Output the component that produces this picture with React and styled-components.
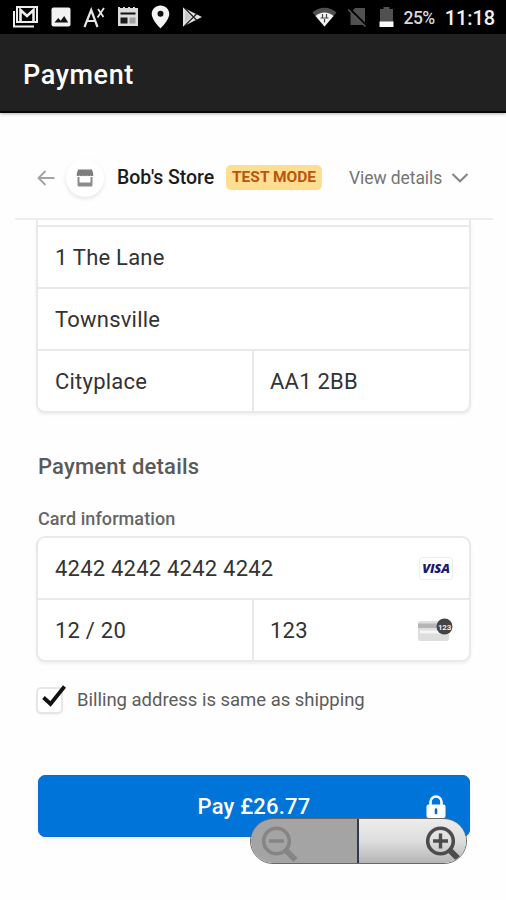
import React, {Fragment} from 'react'
import styled, {createGlobalStyle, css} from 'styled-components'

const LINE = '#e9e9e9'

const GlobalStyle = createGlobalStyle`
  * {
    box-sizing: border-box;
  }

  body {
    margin: 0;
    background: #fefefe;
    font-family: Roboto, 'Liberation Sans', sans-serif;
  }
`

const Screen = styled.div`
  position: relative;
  display: flex;
  flex-direction: column;
  width: 506px;
  height: 900px;
  overflow: hidden;
`

const StatusBar = styled.div`
  display: flex;
  justify-content: space-between;
  align-items: center;
  flex: none;
  height: 34px;
  padding: 0 11px 0 12px;
  background: #000;
`

const StatusGroup = styled.div`
  display: flex;
  align-items: center;
  gap: ${props => props.gap};
`

const Battery = styled.span`
  font-size: 17.5px;
  font-weight: 500;
  letter-spacing: -0.5px;
  line-height: 34px;
  padding-top: 2px;
  margin-left: -2px;
  color: #d8d8d8;
`

const Clock = styled.span`
  font-size: 20px;
  font-weight: 500;
  letter-spacing: -0.1px;
  line-height: 34px;
  padding-top: 2px;
  margin-left: -1px;
  color: #f2f2f2;
`

const AppBar = styled.header`
  flex: none;
  height: 79px;
  padding-left: 23px;
  background: #212121;
  border-bottom: 2px solid #080808;
  box-shadow: 0 1px 3px rgba(0, 0, 0, 0.3);
`

const AppTitle = styled.h1`
  margin: 0;
  font-size: 27px;
  font-weight: 500;
  letter-spacing: 0.6px;
  line-height: 82px;
  color: #fff;
`

const StoreBar = styled.div`
  display: flex;
  align-items: center;
  flex: none;
  height: 107px;
  margin: 0 13px 0 15px;
  padding: 24px 23px 0 22px;
  border-bottom: 2px solid #ededed;
`

const StoreLogo = styled.div`
  display: flex;
  align-items: center;
  justify-content: center;
  width: 38px;
  height: 38px;
  margin: 0 13px 0 11px;
  border-radius: 50%;
  background: #fff;
  box-shadow: 0 2px 4px rgba(0, 0, 0, 0.1);
`

const StoreName = styled.span`
  width: 109px;
  font-size: 19.5px;
  font-weight: 500;
  letter-spacing: -0.05px;
  color: #1c1c1c;
`

const TestBadge = styled.span`
  width: 96px;
  height: 25px;
  border-radius: 5px;
  background: #ffde92;
  font-size: 15.5px;
  font-weight: 700;
  line-height: 24px;
  text-align: center;
  white-space: nowrap;
  color: #bb5510;
`

const ViewDetails = styled.button`
  display: flex;
  align-items: center;
  justify-content: space-between;
  flex: none;
  width: 120px;
  margin-left: 27px;
  padding: 0;
  border: none;
  background: none;
  font-family: inherit;
  font-size: 17.5px;
  letter-spacing: -0.08px;
  white-space: nowrap;
  color: #757575;
`

const Form = styled.main`
  display: flex;
  flex-direction: column;
  padding: 0 35px 0 36px;
`

const FieldGroup = styled.div`
  border: 2px solid ${LINE};
  border-radius: 9px;
  background: #fff;
  box-shadow: 0 2px 3px rgba(0, 0, 0, 0.06);

  ${props =>
    props.scrolled &&
    css`
      padding-top: 5px;
      border-top: none;
      border-top-left-radius: 0;
      border-top-right-radius: 0;
    `};
`

const FieldRow = styled.div`
  display: grid;
  grid-template-columns: ${props => (props.split ? '214px 1fr' : '1fr')};
  height: ${props => (props.ruled ? 62 : 60)}px;
  border-top: ${props => (props.ruled ? `2px solid ${LINE}` : 'none')};
`

const Field = styled.div`
  display: flex;
  align-items: center;
  justify-content: space-between;
  padding: 0 16px 0 17px;
  font-size: 22px;
  letter-spacing: 0.22px;
  color: #333;

  & + & {
    border-left: 2px solid ${LINE};
    padding-left: 16px;
  }
`

const SectionTitle = styled.h2`
  margin: 40px 0 0 2px;
  font-size: 22px;
  font-weight: 500;
  letter-spacing: 0.2px;
  line-height: 28px;
  color: #5a5a5a;
`

const FieldLabel = styled.div`
  margin: 26px 0 5px 2px;
  font-size: 18px;
  font-weight: 500;
  letter-spacing: 0.08px;
  line-height: 24px;
  color: #666;
`

const VisaMark = styled.span`
  width: 34px;
  height: 23px;
  border: 1px solid #ececec;
  border-radius: 3px;
  font-family: 'Open Sans', sans-serif;
  font-size: 13px;
  font-style: italic;
  font-weight: 800;
  letter-spacing: -0.3px;
  line-height: 21px;
  text-align: center;
  color: #1c1a70;
`

const CheckRow = styled.label`
  display: flex;
  align-items: center;
  height: 30px;
  margin-top: 23px;
  font-size: 18.5px;
  letter-spacing: -0.02px;
  white-space: nowrap;
  color: #5c5c5c;
`

const CheckBox = styled.span`
  width: 27px;
  height: 27px;
  margin-right: 14px;
  border: 2px solid #e6e6e6;
  border-radius: 5px;
  background: #fff;
  box-shadow: 0 1px 2px rgba(0, 0, 0, 0.05);

  svg {
    display: block;
    margin: -4px 0 0 2px;
    overflow: visible;
  }
`

const PayButton = styled.button`
  display: grid;
  grid-template-columns: 1fr auto 1fr;
  align-items: center;
  height: 62px;
  margin: 60px 1px 0 2px;
  padding: 0 23px;
  border: 1px solid #0b6bd0;
  border-radius: 7px;
  background: #0074d8;
  box-shadow: 0 3px 5px rgba(0, 0, 0, 0.05);
  font-family: inherit;
  font-size: 22px;
  font-weight: 500;
  letter-spacing: 0.2px;
  color: #fff;
`

const PayLabel = styled.span`
  grid-column: 2;
`

const LockSlot = styled.span`
  justify-self: end;
  height: 23px;
`

// floats over the page like the native WebView zoom buttons
const ZoomControls = styled.div`
  position: absolute;
  left: 250px;
  top: 818px;
  display: flex;
  width: 217px;
  height: 46px;
  border: 1.5px solid #686868;
  border-radius: 23px;
  overflow: hidden;
`

const ZoomButton = styled.button`
  display: flex;
  align-items: center;
  justify-content: ${props => (props.disabled ? 'flex-start' : 'flex-end')};
  width: ${props => (props.disabled ? 108 : 107)}px;
  padding: ${props => (props.disabled ? '4px 0 0 9px' : '4px 2px 0 0')};
  border: none;
  border-right: ${props => (props.disabled ? '2px solid #333a50' : 'none')};
  background: ${props => (props.disabled ? '#a4a4a4' : 'linear-gradient(#ececec, #dedede 50%, #b5b5b5)')};
`

const MailIcon = () => (
  <svg width="27" height="23" viewBox="0 0 27 23" fill="none" stroke="#eee">
    <path d="M2 5v15.500h20" strokeWidth="2" />
    <rect x="5" y="1" width="20" height="15" strokeWidth="2" />
    <path d="M8.500 16V4l6.500 6 6.500-6v12" strokeWidth="2.600" />
  </svg>
)

const PhotoIcon = () => (
  <svg width="20" height="20" viewBox="0 0 20 20">
    <rect x=".5" y=".5" width="19" height="19" rx="2" fill="#f2f2f2" />
    <path d="M3.500 15.500l3.700-4.500 2.500 2.700 3.500-4.700 4 6.500z" fill="#111" />
  </svg>
)

const TranslateIcon = () => (
  <svg width="22" height="21" viewBox="0 0 22 21" fill="none" stroke="#e6e6e6">
    <path d="M1.500 20L8.200 3l6.300 17M4 14h8.400" strokeWidth="2.200" />
    <path d="M15 2l5.500 8M21 1l-6.500 9.500" strokeWidth="1.800" />
  </svg>
)

const NewsIcon = () => (
  <svg width="22" height="20" viewBox="0 0 22 20">
    <path d="M1 2V0h2v1h3V0h2v1h3V0h2v1h3V0h2v1h3v18H1z" fill="#dcdcdc" />
    <path d="M3.500 5.500h15v2h-15z" fill="#111" />
    <path d="M3.500 10.500h7v6h-7z" fill="#1a1a1a" />
    <path d="M12.500 10.500h6v6h-6z" fill="#a0a0a0" />
  </svg>
)

const PinIcon = () => (
  <svg width="19" height="24" viewBox="0 0 19 24">
    <path d="M9.500.5C4.500.5.7 4.300.7 9.100c0 5.900 8.800 14.400 8.800 14.400s8.800-8.500 8.800-14.400c0-4.800-3.800-8.600-8.800-8.600z" fill="#f4f4f4" />
    <circle cx="9.500" cy="8.800" r="3" fill="#111" />
  </svg>
)

const PlayIcon = () => (
  <svg width="21" height="20" viewBox="0 0 21 20">
    <path d="M1 .5L20 10 1 19.500z" fill="#e3e3e3" />
    <path d="M2.500 1L15 13.500M2.500 19L15 6.500" stroke="#222" strokeWidth="1.300" />
    <path d="M3 4v12l6-6z" fill="#c8c8c8" />
  </svg>
)

const WifiIcon = () => (
  <svg width="25" height="20" viewBox="0 0 25 20">
    <path d="M.5 5.500C7-.8 18-.8 24.500 5.500L12.500 19.500z" fill="#505050" />
    <path d="M3.500 9C8.500 4.300 16.500 4.300 21.500 9L12.500 19.500z" fill="#f4f4f4" />
    <path d="M10.500 7v3.500M14.500 7v3.500M8.500 11h8M12.500 12v3.500" stroke="#444" strokeWidth="1.200" />
  </svg>
)

const NoSimIcon = () => (
  <svg width="20" height="20" viewBox="0 0 20 20">
    <path d="M7 1h10v17H2.500V6z" fill="#505050" />
    <path d="M1 1.500L18 18.500" stroke="#000" strokeWidth="2.500" />
    <path d="M0 2.500L17.500 19.500" stroke="#585858" strokeWidth="1.500" />
  </svg>
)

const BatteryIcon = () => (
  <svg width="15" height="22" viewBox="0 0 15 22">
    <path d="M1 3h3.500V1h6v2H14v14H1z" fill="#505050" />
    <path d="M.5 15.500h14v5.500H.5z" fill="#fafafa" />
  </svg>
)

const BackIcon = () => (
  <svg width="18" height="16" viewBox="0 0 18 16" fill="none" stroke="#a3a3a3" strokeWidth="1.800">
    <path d="M17.500 8H1.500M8.500 1L1.500 8l7 7" />
  </svg>
)

const StoreIcon = () => (
  <svg width="18" height="18" viewBox="0 0 18 18">
    <path d="M2 .5h14l1.300 4.500v1.500q-1.400 1.500-2.800 0-1.400 1.500-2.800 0-1.400 1.500-2.700 0-1.400 1.500-2.700 0-1.400 1.500-2.800 0-1.400 1.500-2.800 0V5z" fill="#7c7c7c" />
    <path d="M1.500 8h2v5.500h11V8h2v8q0 1.500-1.500 1.500H3Q1.500 17.500 1.500 16z" fill="#8c8c8c" />
  </svg>
)

const ChevronIcon = () => (
  <svg width="18" height="11" viewBox="0 0 18 11" fill="none" stroke="#858585" strokeWidth="2">
    <path d="M1.500 2L9 9.300 16.500 2" />
  </svg>
)

const CvcIcon = () => (
  <svg width="35" height="24" viewBox="0 0 35 24">
    <rect x="0" y="3" width="31" height="20" rx="2.500" fill="#dedede" />
    <path d="M0 5.500h31V10H0z" fill="#b5b5b5" />
    <path d="M2 12.500h24v3H2z" fill="#f5f5f5" />
    <circle cx="26.500" cy="8.500" r="8" fill="#444" />
    <text x="26.500" y="11.500" textAnchor="middle" fontFamily="Roboto, sans-serif" fontSize="8" fontWeight="700" letterSpacing="-.2" fill="#eee">
      123
    </text>
  </svg>
)

const CheckIcon = () => (
  <svg width="26" height="24" viewBox="0 0 26 24" fill="none" stroke="#111" strokeWidth="3.800">
    <path d="M3.500 12.500l7 6.500L24.500 1.500" />
  </svg>
)

const LockIcon = () => (
  <svg width="20" height="23" viewBox="0 0 20 23">
    <path d="M4.500 11V7a5.500 5.500 0 0111 0v4" fill="none" stroke="#fff" strokeWidth="2.600" />
    <rect x=".5" y="9.500" width="19" height="13.500" rx="2" fill="#fff" />
    <path d="M10 14.500v3.500" stroke="#1764b8" strokeWidth="2.600" strokeLinecap="round" />
  </svg>
)

const MagnifierIcon = ({plus, color}) => (
  <svg width="40" height="40" viewBox="0 0 40 40" fill="none" stroke={color}>
    <circle cx="16.500" cy="18" r="12.800" strokeWidth="3.600" />
    <path d="M25.500 27l10 10" strokeWidth="6" />
    <path d={plus ? 'M9 18h15M16.500 10.500v15' : 'M9 18h15'} strokeWidth="3.400" />
  </svg>
)

const App = () => (
  <Fragment>
    <GlobalStyle />
    <Screen>
      <StatusBar>
        <StatusGroup gap="12px">
          <MailIcon />
          <PhotoIcon />
          <TranslateIcon />
          <NewsIcon />
          <PinIcon />
          <PlayIcon />
        </StatusGroup>
        <StatusGroup gap="11px">
          <WifiIcon />
          <NoSimIcon />
          <BatteryIcon />
          <Battery>25%</Battery>
          <Clock>11:18</Clock>
        </StatusGroup>
      </StatusBar>
      <AppBar>
        <AppTitle>Payment</AppTitle>
      </AppBar>
      <StoreBar>
        <BackIcon />
        <StoreLogo>
          <StoreIcon />
        </StoreLogo>
        <StoreName>Bob's Store</StoreName>
        <TestBadge>TEST MODE</TestBadge>
        <ViewDetails>
          View details
          <ChevronIcon />
        </ViewDetails>
      </StoreBar>
      <Form>
        <FieldGroup scrolled>
          <FieldRow ruled>
            <Field>1 The Lane</Field>
          </FieldRow>
          <FieldRow ruled>
            <Field>Townsville</Field>
          </FieldRow>
          <FieldRow ruled split>
            <Field>Cityplace</Field>
            <Field>AA1 2BB</Field>
          </FieldRow>
        </FieldGroup>
        <SectionTitle>Payment details</SectionTitle>
        <FieldLabel>Card information</FieldLabel>
        <FieldGroup>
          <FieldRow>
            <Field>
              4242 4242 4242 4242
              <VisaMark>VISA</VisaMark>
            </Field>
          </FieldRow>
          <FieldRow ruled split>
            <Field>12 / 20</Field>
            <Field>
              123
              <CvcIcon />
            </Field>
          </FieldRow>
        </FieldGroup>
        <CheckRow>
          <CheckBox>
            <CheckIcon />
          </CheckBox>
          Billing address is same as shipping
        </CheckRow>
        <PayButton>
          <PayLabel>Pay £26.77</PayLabel>
          <LockSlot>
            <LockIcon />
          </LockSlot>
        </PayButton>
      </Form>
      <ZoomControls>
        <ZoomButton disabled>
          <MagnifierIcon color="#858585" />
        </ZoomButton>
        <ZoomButton>
          <MagnifierIcon plus color="#4c4c4c" />
        </ZoomButton>
      </ZoomControls>
    </Screen>
  </Fragment>
)

export default App
